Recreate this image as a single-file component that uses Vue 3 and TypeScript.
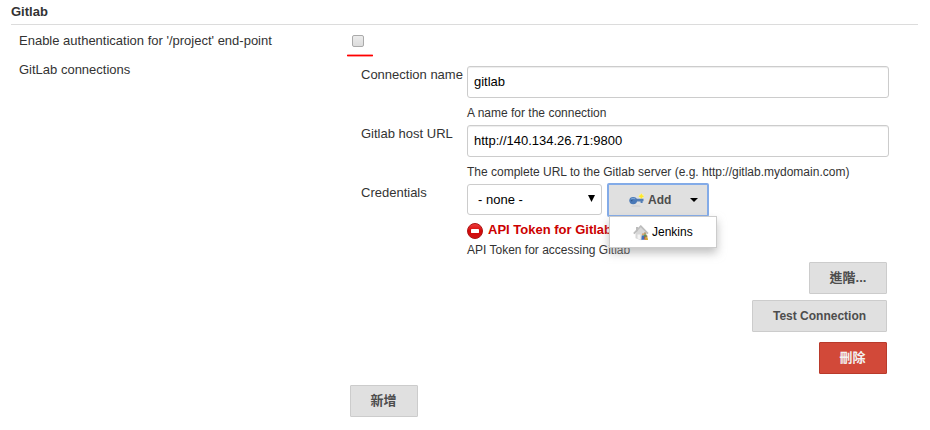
<script setup lang="ts">
import { ref } from 'vue'

interface TextField {
  label: string
  value: string
  help: string
}

const enableAuth = ref(false)
const credential = ref('none')
const fields = ref<TextField[]>([
  { label: 'Connection name', value: 'gitlab', help: 'A name for the connection' },
  {
    label: 'Gitlab host URL',
    value: 'http://140.134.26.71:9800',
    help: 'The complete URL to the Gitlab server (e.g. http://gitlab.mydomain.com)',
  },
])
</script>

<template>
  <main class="page">
    <h2 class="title">Gitlab</h2>

    <div class="row auth-row">
      <label class="label" for="auth">Enable authentication for '/project' end-point</label>
      <div class="check">
        <input id="auth" v-model="enableAuth" class="checkbox" type="checkbox" />
        <span class="underline"></span>
      </div>
    </div>

    <div class="row">
      <span class="label">GitLab connections</span>
      <section class="connections">
        <div v-for="(field, i) in fields" :key="field.label" class="field">
          <label class="name" :for="`field-${i}`">{{ field.label }}</label>
          <div class="control">
            <input :id="`field-${i}`" v-model="field.value" class="input" type="text" spellcheck="false" />
            <p class="help">{{ field.help }}</p>
          </div>
        </div>

        <div class="field credentials">
          <label class="name" for="cred">Credentials</label>
          <div class="control">
            <div class="pickers">
              <div class="select-wrap">
                <select id="cred" v-model="credential" class="select">
                  <option value="none">- none -</option>
                </select>
                <svg class="select-arrow" width="7" height="7" viewBox="0 0 7 7"><path d="M0 0h7L3.5 7z" fill="#000" /></svg>
              </div>
              <div class="add-wrap">
                <button class="add" type="button">
                  <svg class="key" width="16" height="16" viewBox="0 0 16 16">
                    <ellipse cx="7" cy="14" rx="5" ry="0.6" fill="#c9c9c9" />
                    <circle cx="12.3" cy="4.2" r="2.6" fill="#f3eeb0" />
                    <path d="M12.3 1.5l1 1.7 1.8 1-1.8 1-1 1.7-1-1.7-1.8-1 1.8-1z" fill="#ffe92a" />
                    <path d="M6.5 6.8h8v2.4h-.9v1.8h-2V9.4H6.5z" fill="#547eb5" />
                    <ellipse cx="4.2" cy="8.6" rx="3.9" ry="3.6" fill="#4a79b7" />
                    <path d="M1.9 7.1q2-1.6 4.4-.2" stroke="#82a8d8" fill="none" />
                    <circle cx="2.7" cy="8.6" r=".8" fill="#31588e" />
                  </svg>
                  <span>Add</span>
                  <svg class="caret" width="8" height="4" viewBox="0 0 8 4"><path d="M0 0h8L4 4z" fill="#000" /></svg>
                </button>
                <div class="menu">
                  <svg class="house" width="16" height="16" viewBox="0 0 16 16">
                    <path d="M3 2h2v5H3z" fill="#bbb" />
                    <path d="M2.5 8L8 2.3 13.3 8v5.5L8 15.2l-5.5-2z" fill="#d8d8d8" />
                    <path d="M.8 8.6L7.8 1.2l7.2 7.4" fill="none" stroke="#bdbdbd" stroke-width="1.8" />
                    <path d="M4.5 9.5h3v5l-3-.9z" fill="#f4f4f4" />
                    <circle cx="12" cy="8.5" r="1.2" fill="#b99a70" />
                    <path d="M10.8 9.6h2.6l.4 3h-3.4z" fill="#5f9a4d" />
                    <circle cx="10" cy="9.4" r="1.1" fill="#d9a66a" />
                    <path d="M8.8 10.5h2.4l.3 4.2H8.4z" fill="#416fba" />
                    <circle cx="13.5" cy="11.2" r="1" fill="#a7774c" />
                    <path d="M12.2 12.2h2.4l.4 2.8h-2.9z" fill="#d2a52e" />
                    <path d="M11.3 11.7h.9v3h-.9z" fill="#b83a31" />
                  </svg>
                  <span>Jenkins</span>
                </div>
              </div>
            </div>
            <div class="error">
              <svg width="16" height="16" viewBox="0 0 16 16">
                <defs>
                  <linearGradient id="stop" x1="0" y1="0" x2="0" y2="1">
                    <stop offset="0" stop-color="#ef4040" />
                    <stop offset=".5" stop-color="#d40808" />
                    <stop offset="1" stop-color="#cf1515" />
                  </linearGradient>
                </defs>
                <circle cx="8" cy="8" r="7.5" fill="url(#stop)" stroke="#ad1515" />
                <rect x="4" y="6" width="8" height="4" rx=".4" fill="#fff" />
              </svg>
              <span>API Token for Gitlab</span>
            </div>
            <p class="help token-help">API Token for accessing Gitlab</p>
          </div>
        </div>

        <div class="actions">
          <button class="btn advanced" type="button">進階...</button>
          <button class="btn test" type="button">Test Connection</button>
          <button class="btn danger" type="button">刪除</button>
        </div>
        <button class="btn create" type="button">新增</button>
      </section>
    </div>
  </main>
</template>

<style>
body {
  background: #fff;
}
</style>

<style scoped>
.page {
  box-sizing: border-box;
  width: 930px;
  height: 430px;
  overflow: hidden;
  padding: 4px 12px 0 11px;
  font: 13px/16px "Liberation Sans", "Noto Sans CJK TC", sans-serif;
  color: #333;
}
.title {
  margin: 0;
  height: 20px;
  border-bottom: 1px solid #dcdcdc;
  font-size: 13px;
  line-height: 16px;
}
.row {
  display: grid;
  grid-template-columns: 328px 1fr;
  padding-left: 8px;
}
.auth-row {
  margin-top: 8px;
  height: 29px;
}
.check {
  display: flex;
  flex-direction: column;
  align-items: flex-start;
}
.checkbox {
  appearance: none;
  box-sizing: border-box;
  width: 12px;
  height: 12px;
  margin: 2px 0 7px 5px;
  border: 1px solid #aaa;
  border-radius: 2px;
  background: linear-gradient(#ececec, #dcdcdc);
}
.underline {
  width: 26px;
  height: 3px;
  border-radius: 1px;
  background: linear-gradient(#ff9a9a 0 1px, #f00 1px 2px, #ff9a9a 2px);
}
.connections {
  padding: 4px 0 0 3px;
}
.field {
  display: grid;
  grid-template-columns: 106px 422px;
  height: 59px;
  padding-left: 11px;
}
.name {
  padding-top: 1px;
  white-space: nowrap;
}
.input {
  display: block;
  box-sizing: border-box;
  width: 422px;
  height: 32px;
  margin: 0;
  padding: 0 6px 1px;
  border: 1px solid #ccc;
  border-radius: 3px;
  box-shadow: inset 0 1px 1px rgba(0, 0, 0, 0.075);
  background: #fff;
  color: #000;
  font: inherit;
  outline: none;
}
.help {
  margin: 7px 0 0;
  font-size: 12px;
  line-height: 16px;
}
.credentials {
  height: 78px;
}
.pickers {
  display: flex;
  gap: 5px;
  height: 33px;
  margin-top: -1px;
}
.select-wrap {
  position: relative;
  width: 135px;
  padding-top: 1px;
}
.select {
  appearance: none;
  box-sizing: border-box;
  width: 135px;
  height: 31px;
  margin: 0;
  padding: 0 10px;
  border: 1px solid #ccc;
  border-radius: 3px;
  background: #fff;
  color: #000;
  font: inherit;
  outline: none;
}
.select-arrow {
  position: absolute;
  right: 7px;
  top: 12px;
}
.add-wrap {
  position: relative;
}
.add {
  display: flex;
  align-items: center;
  box-sizing: border-box;
  width: 102px;
  height: 34px;
  margin: 0;
  padding: 0 10px 0 20px;
  border: 2px solid #83abe8;
  border-radius: 2px;
  background: #e0e0e0;
  color: #4d4d4d;
  font: bold 12px/16px "Liberation Sans", sans-serif;
}
.key {
  margin-right: 3px;
}
.caret {
  margin-left: auto;
  margin-right: -1px;
}
.menu {
  position: absolute;
  left: 2px;
  top: 33px;
  z-index: 2;
  display: flex;
  align-items: center;
  gap: 3px;
  box-sizing: border-box;
  width: 108px;
  height: 32px;
  padding: 0 0 1px 23px;
  border: 1px solid #ccc;
  background: #fff;
  color: #000;
  font-size: 12px;
  box-shadow: 0 5px 10px rgba(150, 150, 150, 0.6);
}
.house {
  margin-top: 2px;
}
.error {
  display: flex;
  gap: 5px;
  margin-top: 6px;
  white-space: nowrap;
  font-weight: bold;
  color: #c00;
}
.error svg {
  flex: none;
  margin-top: 1px;
}
.token-help {
  margin-top: 3px;
}
.actions {
  display: flex;
  flex-direction: column;
  align-items: flex-end;
  width: 537px;
}
.btn {
  box-sizing: border-box;
  height: 32px;
  margin: 0;
  padding: 0 0 1px;
  border: 1px solid #ccc;
  border-radius: 1px;
  background: #e0e0e0;
  color: #4d4d4d;
  font: bold 13px/16px "Liberation Sans", "Noto Sans CJK TC", sans-serif;
}
.advanced {
  width: 78px;
}
.test {
  width: 135px;
  margin-top: 6px;
  font-size: 12px;
}
.danger {
  width: 68px;
  margin-top: 10px;
  padding-right: 1px;
  border-color: #b93a2b;
  background: #d24939;
  color: #f2f2f2;
}
.create {
  width: 68px;
  margin-top: 11px;
  padding-right: 1px;
}
</style>
